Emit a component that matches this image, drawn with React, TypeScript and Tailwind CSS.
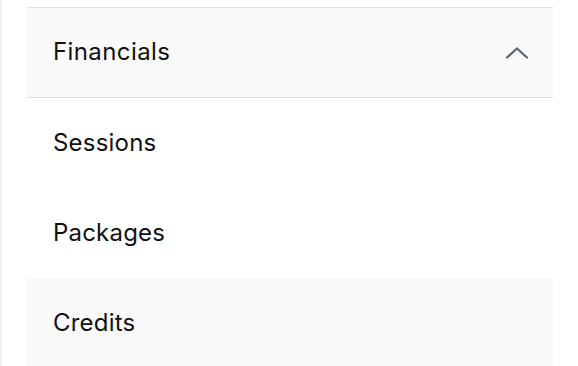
const items = [
  { label: 'Sessions', active: false },
  { label: 'Packages', active: false },
  { label: 'Credits', active: true },
];

export default function App() {
  return (
    <div
      className="h-[366px] w-[578px] overflow-hidden bg-white border-l-2 border-[#eef1fa] pt-[7px]"
      style={{ fontFamily: 'Inter, "Open Sans", sans-serif' }}
    >
      <div className="ml-[25px] w-[526px]">
        {/* Section header */}
        <div className="h-[91px] flex items-center justify-between bg-[#fafafa] border-y border-[#e0e0e0] pl-[26px] pr-[23px]">
          <span className="text-[24px] text-[#111111] tracking-[0.4px] -mt-[1px]">Financials</span>
          <svg width="26" height="16" viewBox="0 0 26 16" fill="none">
            <path
              d="M3 12.5 L13 3.5 L23 12.5"
              stroke="#5f6673"
              strokeWidth="2.3"
              strokeLinecap="round"
              strokeLinejoin="round"
            />
          </svg>
        </div>

        {/* Sub items */}
        {items.map((item) => (
          <div
            key={item.label}
            className={`h-[90px] flex items-center pl-[26px] ${item.active ? 'bg-[#fafafa]' : 'bg-white'}`}
          >
            <span className="text-[24px] text-[#111111] tracking-[0.2px] -mt-[1px]">{item.label}</span>
          </div>
        ))}
      </div>
    </div>
  );
}
